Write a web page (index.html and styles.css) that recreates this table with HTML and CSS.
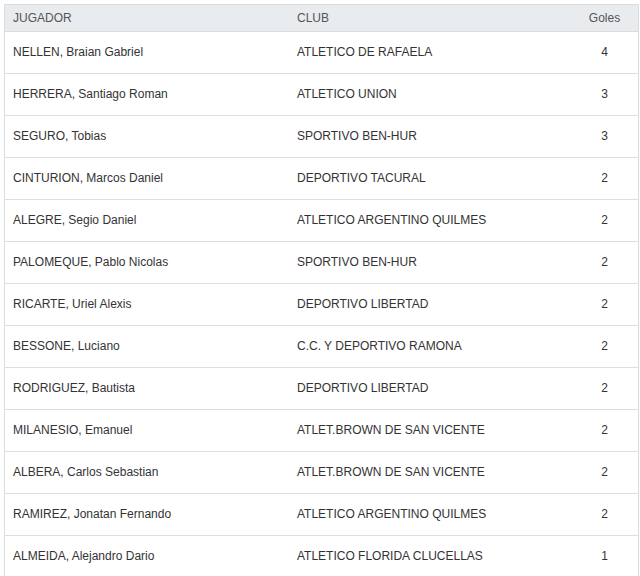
FILE: index.html
```html
<!DOCTYPE html>
<html>
<head>
<meta charset="utf-8">
<link rel="stylesheet" href="styles.css">
</head>
<body>
<table class="scorers">
  <thead>
    <tr><th class="c-name">JUGADOR</th><th class="c-club">CLUB</th><th class="c-goals">Goles</th></tr>
  </thead>
  <tbody>
    <tr><td>NELLEN, Braian Gabriel</td><td>ATLETICO DE RAFAELA</td><td class="c-goals">4</td></tr>
    <tr><td>HERRERA, Santiago Roman</td><td>ATLETICO UNION</td><td class="c-goals">3</td></tr>
    <tr><td>SEGURO, Tobias</td><td>SPORTIVO BEN-HUR</td><td class="c-goals">3</td></tr>
    <tr><td>CINTURION, Marcos Daniel</td><td>DEPORTIVO TACURAL</td><td class="c-goals">2</td></tr>
    <tr><td>ALEGRE, Segio Daniel</td><td>ATLETICO ARGENTINO QUILMES</td><td class="c-goals">2</td></tr>
    <tr><td>PALOMEQUE, Pablo Nicolas</td><td>SPORTIVO BEN-HUR</td><td class="c-goals">2</td></tr>
    <tr><td>RICARTE, Uriel Alexis</td><td>DEPORTIVO LIBERTAD</td><td class="c-goals">2</td></tr>
    <tr><td>BESSONE, Luciano</td><td>C.C. Y DEPORTIVO RAMONA</td><td class="c-goals">2</td></tr>
    <tr><td>RODRIGUEZ, Bautista</td><td>DEPORTIVO LIBERTAD</td><td class="c-goals">2</td></tr>
    <tr><td>MILANESIO, Emanuel</td><td>ATLET.BROWN DE SAN VICENTE</td><td class="c-goals">2</td></tr>
    <tr><td>ALBERA, Carlos Sebastian</td><td>ATLET.BROWN DE SAN VICENTE</td><td class="c-goals">2</td></tr>
    <tr><td>RAMIREZ, Jonatan Fernando</td><td>ATLETICO ARGENTINO QUILMES</td><td class="c-goals">2</td></tr>
    <tr><td>ALMEIDA, Alejandro Dario</td><td>ATLETICO FLORIDA CLUCELLAS</td><td class="c-goals">1</td></tr>
  </tbody>
</table>
</body>
</html>
```
FILE: styles.css
```css
html, body {
  margin: 0;
  padding: 0;
  background: #fff;
}
body {
  padding: 4px 0 0 4px;
  font-family: "Liberation Sans", Arial, sans-serif;
  font-size: 12px;
}
.scorers {
  border-collapse: collapse;
  table-layout: fixed;
  width: 632px;
  border: 1px solid #dcdcdc;
}
.scorers th {
  background: #e9ecef;
  color: #555;
  font-weight: normal;
  text-align: left;
  height: 25px;
  padding: 0 0 1px 8px;
  border-bottom: 1px solid #dcdcdc;
  vertical-align: middle;
}
.scorers td {
  color: #333;
  height: 40px;
  padding: 0 0 1px 8px;
  border-bottom: 1px solid #dedede;
  vertical-align: middle;
}
.c-name { width: 276px; }
.c-club { width: 277px; }
.c-goals { width: 61px; }
.scorers th.c-goals,
.scorers td.c-goals {
  text-align: center;
  padding-left: 0;
  padding-right: 3px;
}
```
